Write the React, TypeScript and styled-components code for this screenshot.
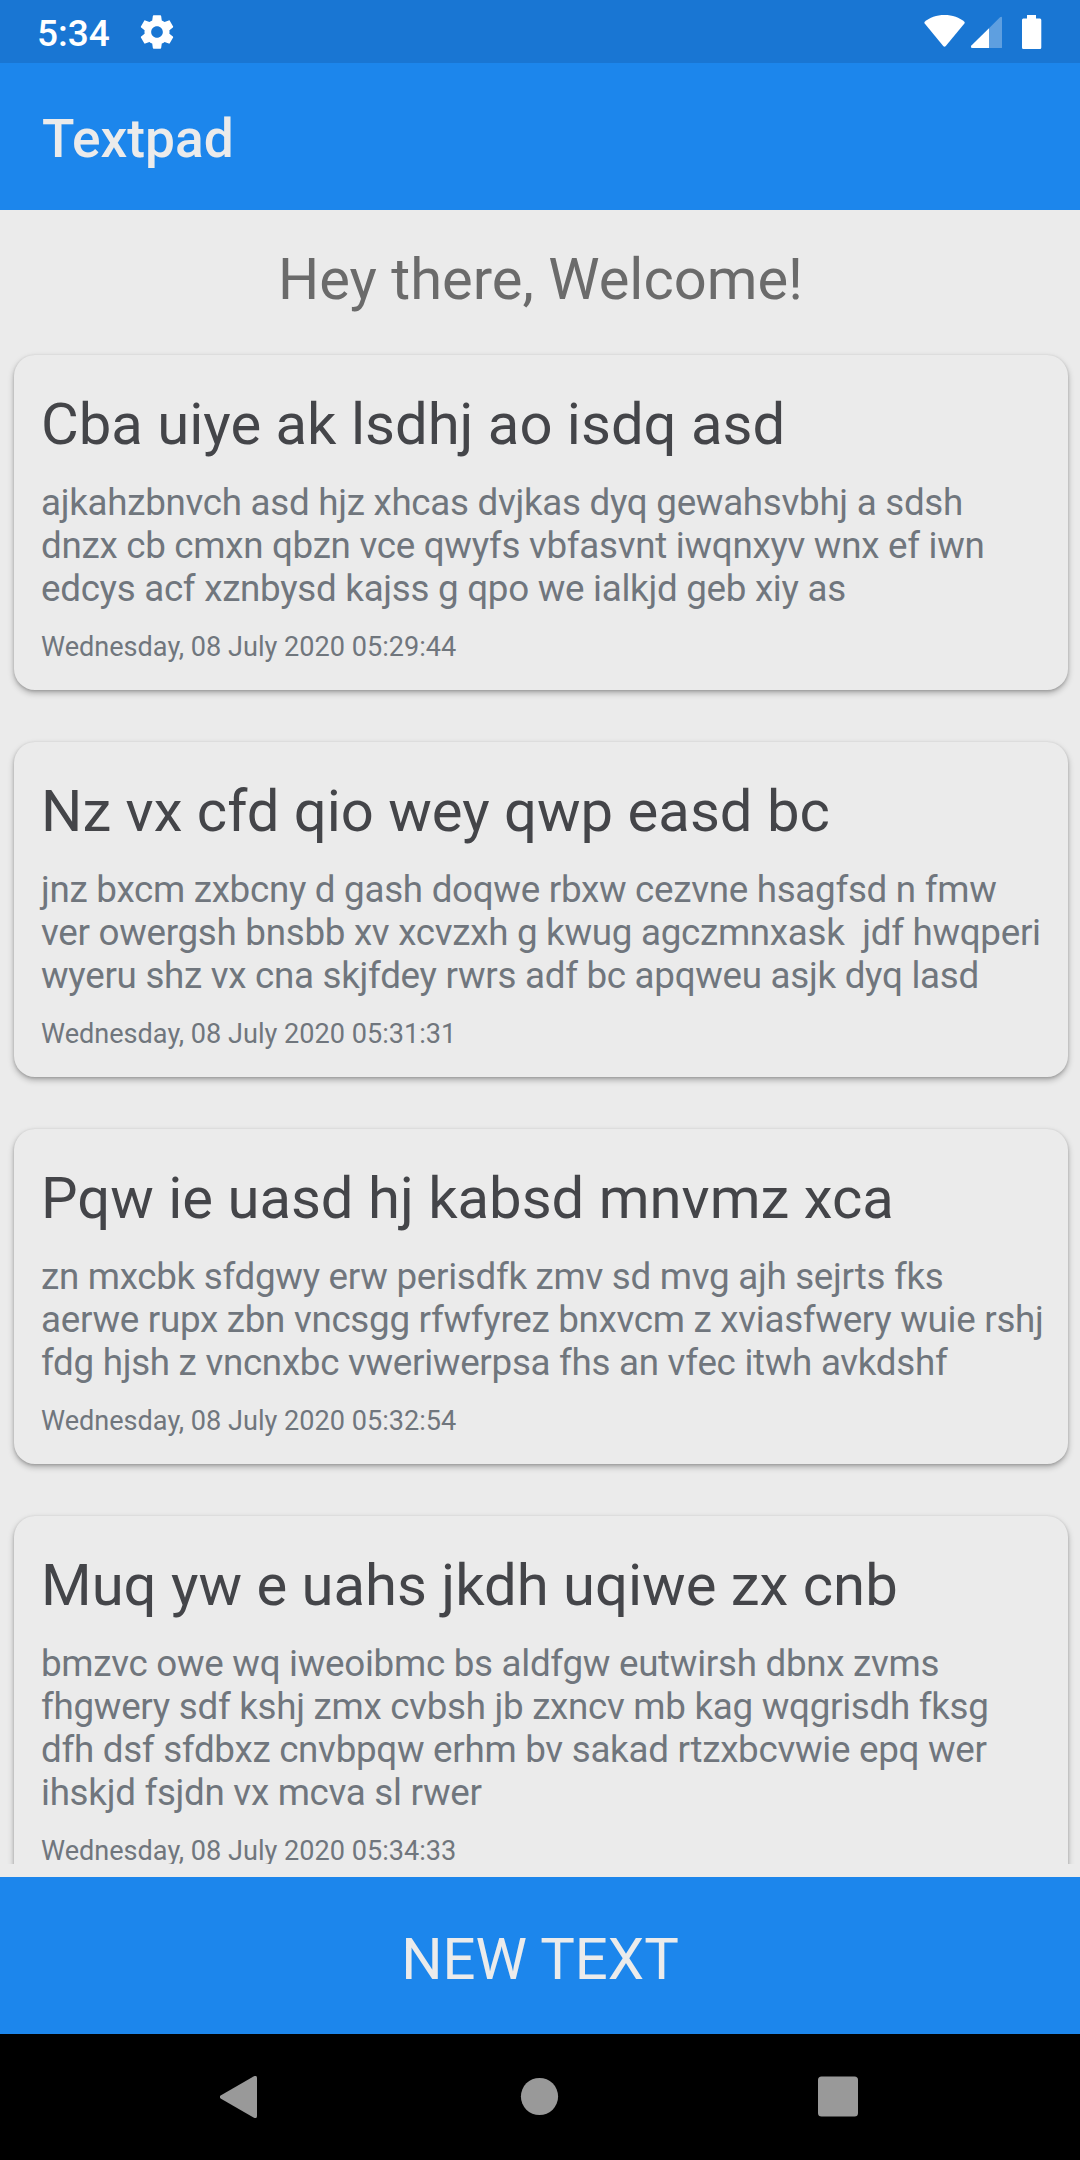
import React from "react";
import styled, { createGlobalStyle } from "styled-components";

const Global = createGlobalStyle`
  * { box-sizing: border-box; }
  body { margin: 0; background: #ebebeb; }
`;

const Screen = styled.div`
  width: 1080px;
  height: 2160px;
  display: flex;
  flex-direction: column;
  overflow: hidden;
  background: #ebebeb;
  font-family: Roboto, "Noto Sans", sans-serif;
`;

const StatusBar = styled.header`
  flex: none;
  height: 63px;
  padding: 0 38px 0 37px;
  display: flex;
  align-items: center;
  justify-content: space-between;
  background: #1976d3;
  color: #fff;
`;

const StatusGroup = styled.div<{ $gap: number }>`
  display: flex;
  align-items: center;
  gap: ${(p) => p.$gap}px;
`;

const Clock = styled.span`
  font-size: 37px;
  font-weight: 500;
  line-height: 43px;
  padding-top: 3px;
`;

const AppBar = styled.div`
  flex: none;
  height: 147px;
  padding: 5px 42px 0;
  display: flex;
  align-items: center;
  background: #1c86ec;
`;

const AppTitle = styled.h1`
  margin: 0;
  color: #ebebeb;
  font-size: 53.3px;
  font-weight: 500;
  line-height: 62px;
`;

const Content = styled.main`
  flex: none;
  height: 1654px;
  overflow: hidden;
`;

const Welcome = styled.h2`
  margin: 0;
  padding: 35px 0 42px 1px;
  text-align: center;
  color: #6b6b6b;
  font-size: 57.85px;
  font-weight: 400;
  line-height: 68px;
`;

const NoteList = styled.div`
  display: flex;
  flex-direction: column;
  gap: 52px;
  padding: 0 12px 0 14px;
`;

const Card = styled.article`
  padding: 35px 10px 27px 27px;
  border-radius: 21px;
  background: #ebebeb;
  box-shadow: 0 3px 6px rgba(0, 0, 0, 0.28), 0 1px 3px rgba(0, 0, 0, 0.16);
`;

const NoteTitle = styled.h3`
  margin: 0 0 23px;
  color: #444549;
  font-size: 58px;
  font-weight: 400;
  line-height: 68px;
`;

const NoteBody = styled.p`
  margin: 0;
  color: #70767d;
  font-size: 36.75px;
  line-height: 43px;
  letter-spacing: -0.285px;
  white-space: pre;
`;

const NoteDate = styled.time`
  display: block;
  margin-top: 21px;
  color: #70767d;
  font-size: 27.1px;
  line-height: 32px;
`;

const NewText = styled.button`
  flex: none;
  height: 157px;
  margin: 13px 0 0;
  padding: 6px 0 0;
  border: 0;
  background: #1c86ec;
  color: #ebebeb;
  font-family: inherit;
  font-size: 58px;
  line-height: 68px;
`;

const NavBar = styled.nav`
  flex: none;
  height: 126px;
  display: flex;
  align-items: center;
  justify-content: center;
  gap: 257px;
  background: #000;
`;

const NavButton = styled.button`
  width: 42px;
  height: 42px;
  padding: 0;
  border: 0;
  background: none;
  svg { display: block; }
`;

const notes = [
  {
    title: "Cba uiye ak lsdhj ao isdq asd",
    body: "ajkahzbnvch asd hjz xhcas dvjkas dyq gewahsvbhj a sdsh\ndnzx cb cmxn qbzn vce qwyfs vbfasvnt iwqnxyv wnx ef iwn\nedcys acf xznbysd kajss g qpo we ialkjd geb xiy as",
    date: "Wednesday, 08 July 2020 05:29:44",
  },
  {
    title: "Nz vx cfd qio wey qwp easd bc",
    body: "jnz bxcm zxbcny d gash doqwe rbxw cezvne hsagfsd n fmw\nver owergsh bnsbb xv xcvzxh g kwug agczmnxask  jdf hwqperi\nwyeru shz vx cna skjfdey rwrs adf bc apqweu asjk dyq lasd",
    date: "Wednesday, 08 July 2020 05:31:31",
  },
  {
    title: "Pqw ie uasd hj kabsd mnvmz xca",
    body: "zn mxcbk sfdgwy erw perisdfk zmv sd mvg ajh sejrts fks\naerwe rupx zbn vncsgg rfwfyrez bnxvcm z xviasfwery wuie rshj\nfdg hjsh z vncnxbc vweriwerpsa fhs an vfec itwh avkdshf",
    date: "Wednesday, 08 July 2020 05:32:54",
  },
  {
    title: "Muq yw e uahs jkdh uqiwe zx cnb",
    body: "bmzvc owe wq iweoibmc bs aldfgw eutwirsh dbnx zvms\nfhgwery sdf kshj zmx cvbsh jb zxncv mb kag wqgrisdh fksg\ndfh dsf sfdbxz cnvbpqw erhm bv sakad rtzxbcvwie epq wer\nihskjd fsjdn vx mcva sl rwer",
    date: "Wednesday, 08 July 2020 05:34:33",
  },
];

const GearIcon = () => (
  <svg width="40" height="40" viewBox="0 0 24 24" fill="#fff">
    <path d="M19.43 12.98c.04-.32.07-.64.07-.98s-.03-.66-.07-.98l2.11-1.65c.19-.15.24-.42.12-.64l-2-3.46c-.12-.22-.39-.3-.61-.22l-2.49 1c-.52-.4-1.08-.73-1.69-.98l-.38-2.65C14.46 2.18 14.25 2 14 2h-4c-.25 0-.46.18-.49.42l-.38 2.65c-.61.25-1.17.59-1.69.98l-2.49-1c-.23-.09-.49 0-.61.22l-2 3.46c-.13.22-.07.49.12.64l2.11 1.65c-.04.32-.07.65-.07.98s.03.66.07.98l-2.11 1.65c-.19.15-.24.42-.12.64l2 3.46c.12.22.39.3.61.22l2.49-1c.52.4 1.08.73 1.69.98l.38 2.65c.03.24.24.42.49.42h4c.25 0 .46-.18.49-.42l.38-2.65c.61-.25 1.17-.59 1.69-.98l2.49 1c.23.09.49 0 .61-.22l2-3.46c.12-.22.07-.49-.12-.64l-2.11-1.65zM12 15.5c-1.93 0-3.5-1.57-3.5-3.5s1.57-3.5 3.5-3.5 3.5 1.57 3.5 3.5-1.57 3.5-3.5 3.5z" />
  </svg>
);

const SignalIcons = () => (
  <svg width="118" height="36" viewBox="924 13 118 36" fill="#fff">
    <path d="M944.5 14C936.500 14 929.500 16.700 924.700 20.800Q924 21.600 924.700 22.500L943.200 45Q944.500 46.300 945.800 45L964.400 22.500Q965.100 21.600 964.400 20.800C959.500 16.700 952.500 14 944.500 14Z" />
    <path d="M989 27.300L1000 16.300Q1002 14.700 1002 17V46.500Q1002 47 1001.500 47H989Z" fillOpacity=".3" />
    <path d="M989 27.300L971.400 44.500Q970 47 972.500 47H989Z" />
    <path d="M1027 14H1036V17.500H1040Q1041.300 17.500 1041.300 19V46.500Q1041.300 48 1040 48H1023.300Q1022 48 1022 46.500V19Q1022 17.500 1023.300 17.500H1027Z" />
  </svg>
);

export default function App() {
  return (
    <Screen>
      <Global />
      <StatusBar>
        <StatusGroup $gap={27}>
          <Clock>5:34</Clock>
          <GearIcon />
        </StatusGroup>
        <SignalIcons />
      </StatusBar>
      <AppBar>
        <AppTitle>Textpad</AppTitle>
      </AppBar>
      <Content>
        <Welcome>Hey there, Welcome!</Welcome>
        <NoteList>
          {notes.map((n) => (
            <Card key={n.date}>
              <NoteTitle>{n.title}</NoteTitle>
              <NoteBody>{n.body}</NoteBody>
              <NoteDate>{n.date}</NoteDate>
            </Card>
          ))}
        </NoteList>
      </Content>
      <NewText>NEW TEXT</NewText>
      <NavBar>
        <NavButton aria-label="Back">
          <svg width="42" height="42" viewBox="1 0 42 42">
            <path d="M1.600 19.600L34.500 0.400Q38 -1.200 38 2V40Q38 43.200 34.500 41.600L1.600 22.400Q0 21 1.600 19.600Z" fill="#999" />
          </svg>
        </NavButton>
        <NavButton aria-label="Home">
          <svg width="42" height="42" viewBox="0 0 42 42">
            <circle cx="20.500" cy="20.500" r="18.600" fill="#999" />
          </svg>
        </NavButton>
        <NavButton aria-label="Overview">
          <svg width="42" height="42" viewBox="0 0 42 42">
            <rect x="0" y="0.500" width="40" height="40" rx="3.500" fill="#999" />
          </svg>
        </NavButton>
      </NavBar>
    </Screen>
  );
}
